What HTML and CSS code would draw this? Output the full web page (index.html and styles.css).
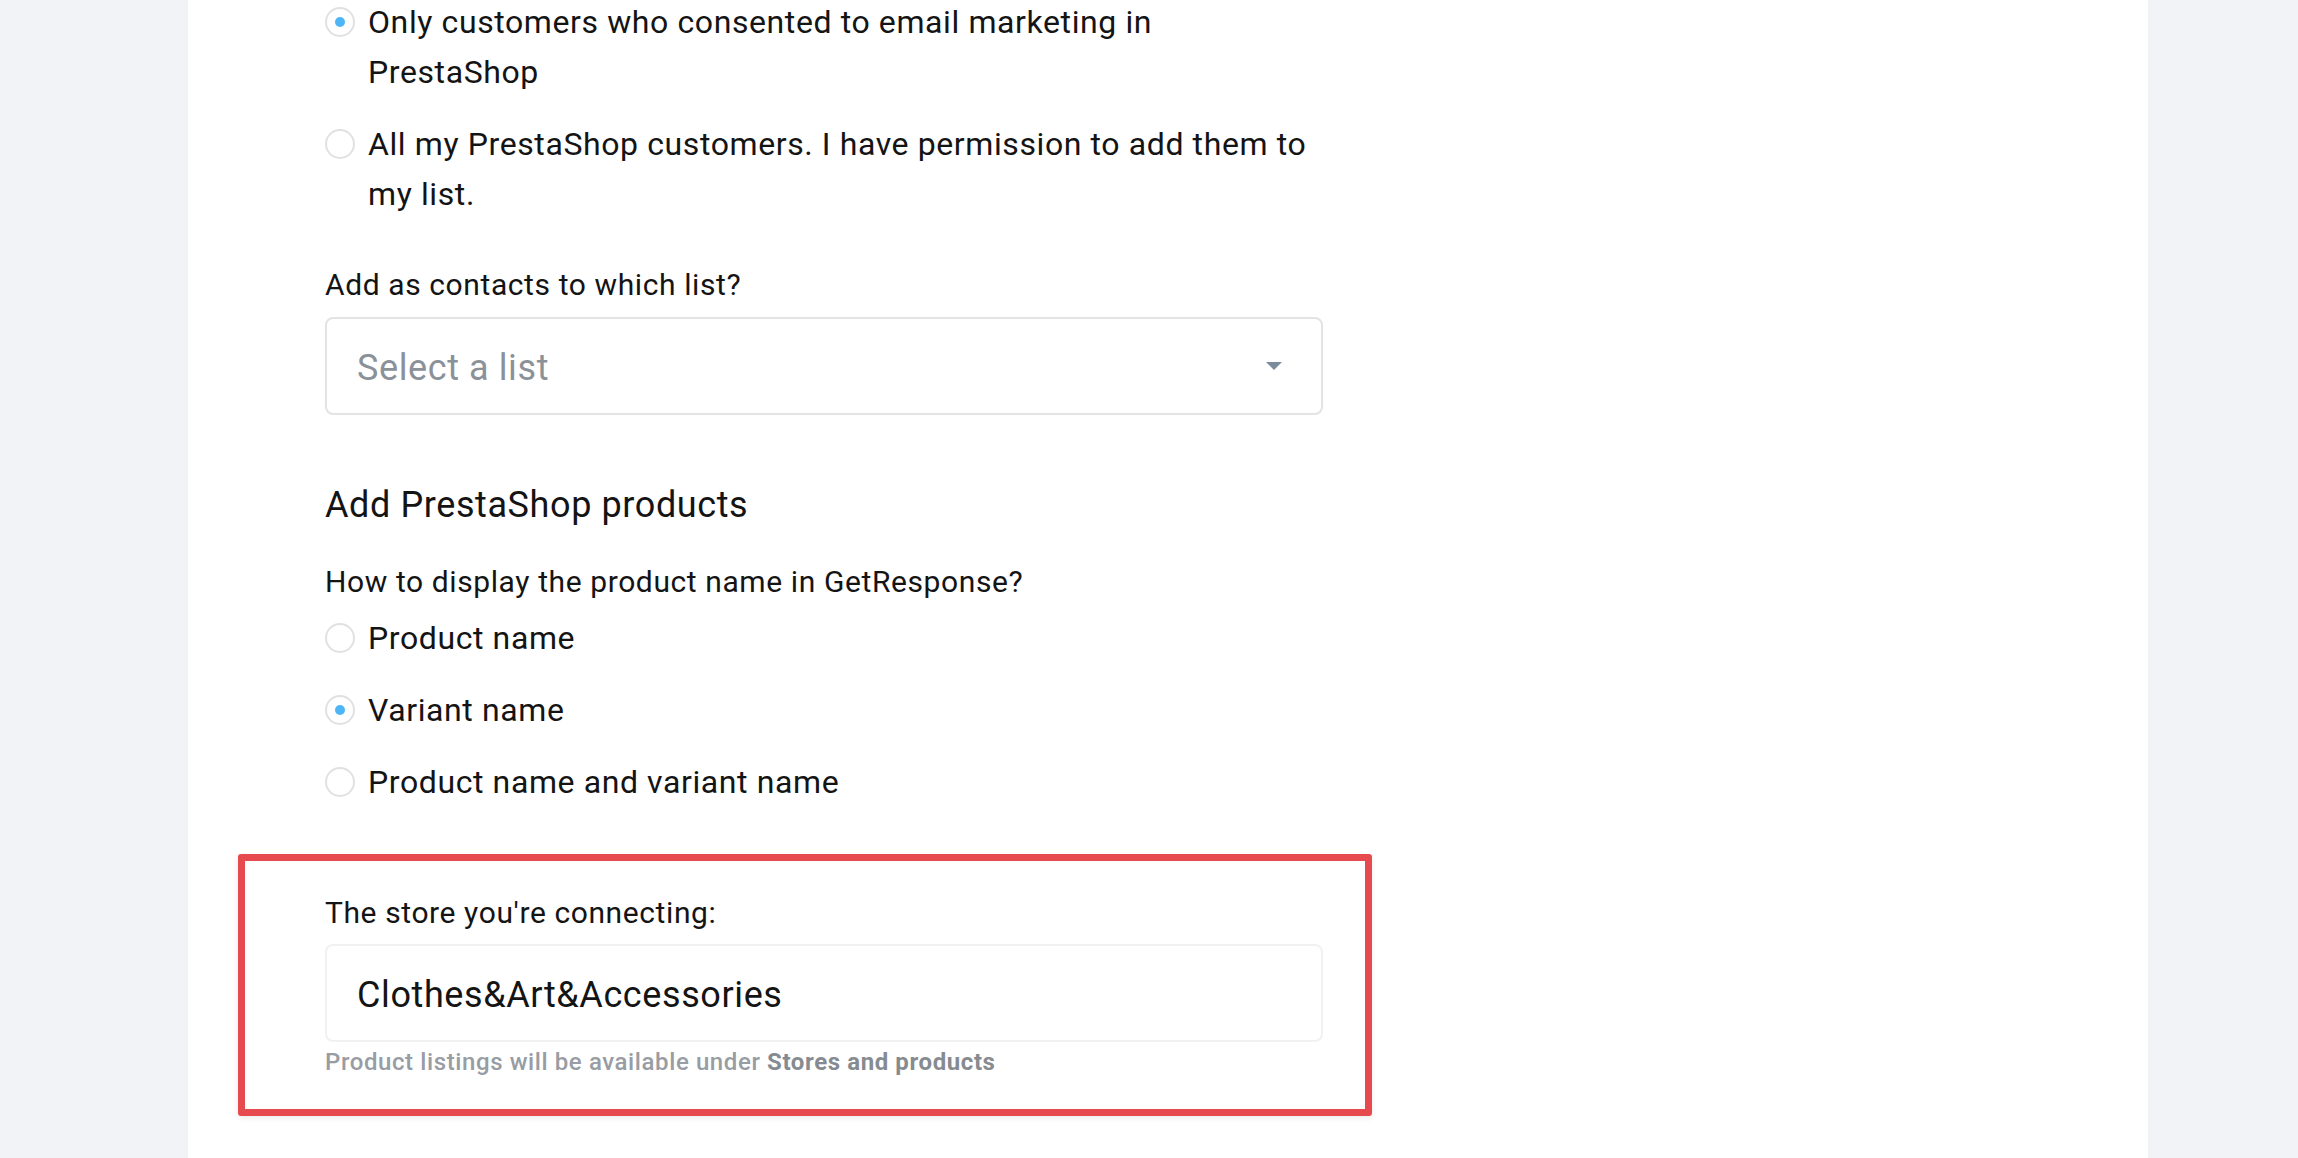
FILE: index.html
```html
<!DOCTYPE html>
<html lang="en">
<head>
  <meta charset="UTF-8" />
  <meta name="viewport" content="width=device-width, initial-scale=1.0"/>
  <title>PrestaShop | GetResponse</title>
  <link rel="stylesheet" href="styles.css">
</head>
<body>
  <main class="panel">
    <form class="form" autocomplete="off">
      <div class="radio-group">
        <label class="radio">
          <span class="radio-mark checked"></span>
          <span class="radio-text">Only customers who consented to email marketing in<br>PrestaShop</span>
        </label>
        <label class="radio">
          <span class="radio-mark"></span>
          <span class="radio-text">All my PrestaShop customers. I have permission to add them to<br>my list.</span>
        </label>
      </div>

      <div class="field-label list-label">Add as contacts to which list?</div>
      <div class="select">
        <span class="select-placeholder">Select a list</span>
        <svg class="select-arrow" width="16" height="8" viewBox="0 0 16 8">
          <path d="M0 0h16L8 8z" fill="#7a8b9b"/>
        </svg>
      </div>

      <h3 class="section-title">Add PrestaShop products</h3>
      <div class="field-label how-label">How to display the product name in GetResponse?</div>
      <div class="radio-group products">
        <label class="radio">
          <span class="radio-mark"></span>
          <span class="radio-text">Product name</span>
        </label>
        <label class="radio">
          <span class="radio-mark checked"></span>
          <span class="radio-text">Variant name</span>
        </label>
        <label class="radio">
          <span class="radio-mark"></span>
          <span class="radio-text">Product name and variant name</span>
        </label>
      </div>

      <div class="store-box">
        <div class="field-label">The store you're connecting:</div>
        <div class="store-input">Clothes&amp;Art&amp;Accessories</div>
        <div class="helper">Product listings will be available under <strong>Stores and products</strong></div>
      </div>
    </form>
  </main>
</body>
</html>
```

FILE: styles.css
```css
:root {
  --bg: #f2f3f7;
  --white: #ffffff;
  --text: #141414;
  --muted: #8b9199;
  --blue: #4db6f7;
  --red: #e64a4e;
}

* {
  box-sizing: border-box;
  margin: 0;
  padding: 0;
}

body {
  font-family: Roboto, 'Noto Sans', Arial, sans-serif;
  background-color: var(--bg);
  color: var(--text);
  letter-spacing: 0.6px;
  overflow: hidden;
}

.panel {
  display: flow-root;
  margin-left: 188px;
  width: 1960px;
  min-height: 100vh;
  background-color: var(--white);
  padding-left: 137px;
}

.form {
  width: 998px;
  margin-top: -3px;
}

.radio-group {
  display: flex;
  flex-direction: column;
  gap: 22px;
}

.radio {
  display: flex;
  align-items: flex-start;
  gap: 13px;
}

.radio-mark {
  flex: none;
  width: 30px;
  height: 30px;
  margin-top: 10px;
  border: 2px solid #e1e1e1;
  border-radius: 50%;
  display: grid;
  place-items: center;
}

.radio-mark.checked::after {
  content: "";
  width: 10px;
  height: 10px;
  border-radius: 50%;
  background-color: var(--blue);
}

.radio-text {
  font-size: 32px;
  line-height: 50px;
}

.field-label {
  font-size: 30px;
  line-height: 40px;
}

.list-label {
  margin-top: 46px;
}

.select {
  margin-top: 12px;
  height: 98px;
  border: 2px solid #e3e3e3;
  border-radius: 8px;
  padding: 3px 39px 0 30px;
  display: flex;
  align-items: center;
  justify-content: space-between;
}

.select-placeholder {
  font-size: 36px;
  color: var(--muted);
}

.select-arrow {
  margin-top: -3px;
}

.section-title {
  margin-top: 66px;
  font-size: 36px;
  line-height: 48px;
  font-weight: 400;
}

.how-label {
  margin-top: 33px;
}

.radio-group.products {
  margin-top: 11px;
  gap: 22px;
}

.store-box {
  margin-top: 47px;
  margin-left: -87px;
  width: 1134px;
  border: 7px solid var(--red);
  border-radius: 3px;
  padding: 32px 42px 31px 80px;
  box-shadow: 0 2px 6px rgba(0, 0, 0, 0.08);
}

.store-input {
  margin-top: 11px;
  height: 98px;
  border: 2px solid #f1f1f1;
  border-radius: 8px;
  padding: 4px 0 0 30px;
  display: flex;
  align-items: center;
  font-size: 36px;
}

.helper {
  margin-top: 4px;
  font-size: 24px;
  line-height: 32px;
  font-weight: 500;
  color: #989ca3;
}

.helper strong {
  font-weight: 700;
  color: #868b92;
}
```
